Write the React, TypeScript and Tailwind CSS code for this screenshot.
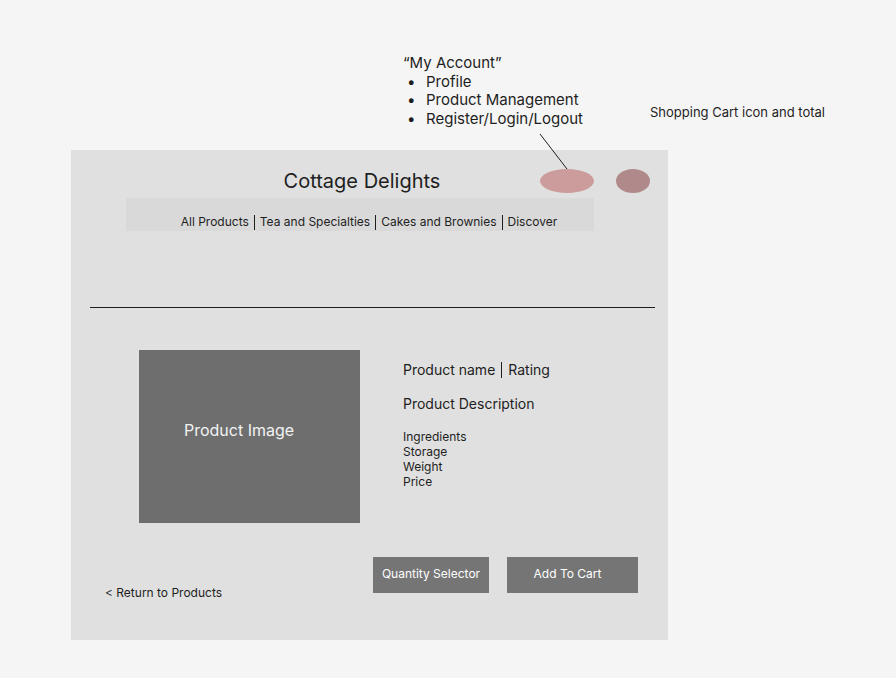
import React from 'react';

const NAV = ['All Products', 'Tea and Specialties', 'Cakes and Brownies', 'Discover'];
const DETAILS = ['Ingredients', 'Storage', 'Weight', 'Price'];
const ACCOUNT_ITEMS = ['Profile', 'Product Management', 'Register/Login/Logout'];

export default function App() {
  return (
    <div
      className="relative w-[896px] h-[678px] bg-[#f5f5f5] text-[#1e1e1e] overflow-hidden"
      style={{ fontFamily: 'Inter, "Noto Sans", sans-serif' }}
    >
      {/* Annotations */}
      <div className="absolute left-[403px] top-[54px] text-[15px] leading-[18.5px]">
        <p>“My Account”</p>
        {ACCOUNT_ITEMS.map((item) => (
          <div key={item} className="flex">
            <span className="w-[23px] pl-[4px]">•</span>
            <span>{item}</span>
          </div>
        ))}
      </div>
      <p className="absolute left-[650px] top-[104px] text-[13px] leading-[16px]">Shopping Cart icon and total</p>
      <svg className="absolute left-0 top-0 pointer-events-none" width="896" height="678">
        <line x1="540" y1="134" x2="567" y2="169" stroke="#1e1e1e" strokeWidth="1" />
      </svg>

      {/* Wireframe panel */}
      <div className="ml-[71px] pt-[150px]">
        <div className="w-[597px] h-[490px] bg-[#e0e0e0]">
          {/* Header */}
          <div className="flex items-center pt-[19px] h-[43px]">
            <h1 className="ml-[211px] w-[160px] text-center whitespace-nowrap text-[20px] leading-[24px]">Cottage Delights</h1>
            <div className="ml-[98px] w-[54px] h-[24px] rounded-[50%] bg-[#cc9b9b]" />
            <div className="ml-[22px] w-[34px] h-[24px] rounded-[50%] bg-[#b08a8a]" />
          </div>
          <nav className="ml-[55px] mt-[5px] w-[468px] h-[33px] bg-[#d9d9d9] flex items-end justify-center pl-[18px] pb-[2px] text-[12px] leading-[15px] whitespace-nowrap">
            {NAV.map((n, i) => (
              <React.Fragment key={n}>
                {i > 0 && <span className="inline-block w-px h-[15px] bg-[#1e1e1e] mx-[5px] self-end mb-[-1px]" />}
                <span>{n}</span>
              </React.Fragment>
            ))}
          </nav>

          <div className="ml-[19px] mr-[13px] mt-[76px] h-px bg-[#1e1e1e]" />

          {/* Product */}
          <div className="flex mt-[42px]">
            <div className="ml-[68px] w-[221px] h-[173px] bg-[#6e6e6e] flex items-center justify-center pr-[21px] pb-[13px] text-[16px] text-[#f2f2f2]">
              Product Image
            </div>
            <div className="ml-[43px] pt-[11px]">
              <p className="flex items-center text-[14px] leading-[17px]">
                Product name
                <span className="inline-block w-px h-[16px] bg-[#1e1e1e] mx-[6px]" />
                Rating
              </p>
              <p className="mt-[17px] text-[14px] leading-[17px]">Product Description</p>
              <div className="mt-[17px] text-[12px] leading-[15px]">
                {DETAILS.map((d) => (
                  <p key={d}>{d}</p>
                ))}
              </div>
            </div>
          </div>

          {/* Actions */}
          <div className="flex mt-[34px]">
            <div className="w-[302px] pl-[34px] pt-[28px] text-[12px] leading-[15px]">&lt; Return to Products</div>
            <button className="w-[116px] h-[36px] bg-[#757575] text-white text-[12px] pb-[2px]">Quantity Selector</button>
            <button className="ml-[18px] w-[131px] h-[36px] bg-[#757575] text-white text-[12px] pr-[10px] pb-[2px]">Add To Cart</button>
          </div>
        </div>
      </div>
    </div>
  );
}
